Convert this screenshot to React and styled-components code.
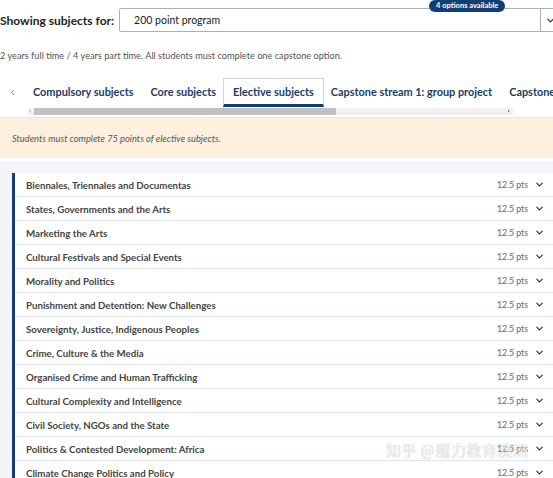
import React from 'react';
import styled, { createGlobalStyle } from 'styled-components';
import { ChevronDown, ChevronLeft } from 'lucide-react';

const GlobalStyle = createGlobalStyle`
  html, body {
    margin: 0;
    padding: 0;
    background: #ffffff;
    font-family: 'Lato', 'Noto Sans', sans-serif;
    overflow: hidden;
  }
`;

const Page = styled.div`
  position: relative;
  width: 553px;
  height: 478px;
  overflow: hidden;
`;

const SelectorRow = styled.div`
  display: flex;
  align-items: center;
  gap: 5px;
  padding-top: 8px;
  height: 24px;
`;

const SelectorLabel = styled.span`
  font-size: 12px;
  font-weight: 700;
  color: #222;
  white-space: nowrap;
`;

const SelectBox = styled.div`
  position: relative;
  flex: none;
  width: 462px;
  height: 24px;
  border: 1px solid #a9b1ba;
  border-radius: 2px;
  display: flex;
  align-items: center;
  box-sizing: border-box;
`;

const SelectValue = styled.span`
  flex: 1;
  padding-left: 14px;
  font-size: 10.5px;
  color: #222;
`;

const SelectArrow = styled.span`
  width: 40px;
  height: 100%;
  border-left: 1px solid #a9b1ba;
  display: flex;
  align-items: center;
  padding-left: 4px;
  box-sizing: border-box;
  color: #333;
`;

const Badge = styled.span`
  position: absolute;
  top: -9px;
  left: 309px;
  background: #123f73;
  color: #fff;
  font-size: 7.5px;
  font-weight: 700;
  padding: 1px 7px 2px;
  border-radius: 8px;
  white-space: nowrap;
`;

const Description = styled.p`
  margin: 18px 0 0;
  font-size: 9.2px;
  color: #555;
`;

const TabsArea = styled.div`
  margin-top: 17px;
  padding-left: 24.5px;
  position: relative;
`;

const TabPrev = styled.span`
  position: absolute;
  left: 8px;
  top: 10px;
  color: #555;
  display: flex;
`;

const TabList = styled.div`
  display: flex;
  align-items: stretch;
  height: 29px;
`;

const Tab = styled.div`
  display: flex;
  align-items: center;
  padding: 0 ${p => (p.$active ? '9px' : '7.5px')};
  margin: 0 ${p => (p.$active ? '-1.5px' : '0')};
  font-size: 10.9px;
  font-weight: 700;
  color: #1b3c66;
  white-space: nowrap;
  box-sizing: border-box;
  border: 1px solid ${p => (p.$active ? '#c9d6e3' : 'transparent')};
  border-bottom: 3px solid ${p => (p.$active ? '#123f73' : 'transparent')};
`;

const ScrollTrack = styled.div`
  position: relative;
  height: 7px;
  margin: 1px 40px 2px 3px;
  background: #f1f1f1;
`;

const ScrollThumb = styled.div`
  position: absolute;
  left: 6px;
  top: 0;
  height: 100%;
  background: #c1c1c1;
`;

const ScrollArrow = styled.span`
  position: absolute;
  top: 2px;
  ${p => (p.$right ? 'right: 3px;' : 'left: 1px;')}
  width: 0;
  height: 0;
  border-top: 1.5px solid transparent;
  border-bottom: 1.5px solid transparent;
  ${p => (p.$right ? 'border-left: 2px solid #555;' : 'border-right: 2px solid #aaa;')}
`;

const Notice = styled.div`
  background: #fdf0de;
  height: 40px;
  display: flex;
  align-items: center;
  padding-left: 12px;
  font-size: 9.3px;
  font-style: italic;
  color: #555;
  border-top: 1px solid #f6e4c8;
`;

const ListArea = styled.div`
  background: #f3f5f8;
  padding: 12px 0 0 12px;
  margin-top: 3px;
`;

const SubjectList = styled.ul`
  list-style: none;
  margin: 0;
  padding: 0;
  background: #fff;
  border-left: 3px solid #123f73;
`;

const SubjectRow = styled.li`
  height: 24px;
  display: flex;
  align-items: center;
  padding: 0 8px 0 11px;
  border-bottom: 1px solid #dce3ea;
  box-sizing: border-box;
`;

const SubjectName = styled.span`
  flex: 1;
  font-size: 9.7px;
  font-weight: 700;
  color: #444;
`;

const Points = styled.span`
  font-size: 8.7px;
  color: #666;
  margin-right: 6px;
`;

const RowChevron = styled.span`
  display: flex;
  color: #333;
`;

const Watermark = styled.div`
  position: absolute;
  left: 386px;
  top: 439px;
  font-family: 'Noto Sans CJK SC', sans-serif;
  font-size: 15px;
  color: rgba(255, 255, 255, 0.85);
  text-shadow: 0 0 1px rgba(0, 0, 0, 0.35);
  letter-spacing: 0.5px;
  white-space: nowrap;
`;

const tabs = [
  'Compulsory subjects',
  'Core subjects',
  'Elective subjects',
  'Capstone stream 1: group project',
  'Capstone stream 2',
];

const subjects = [
  'Biennales, Triennales and Documentas',
  'States, Governments and the Arts',
  'Marketing the Arts',
  'Cultural Festivals and Special Events',
  'Morality and Politics',
  'Punishment and Detention: New Challenges',
  'Sovereignty, Justice, Indigenous Peoples',
  'Crime, Culture & the Media',
  'Organised Crime and Human Trafficking',
  'Cultural Complexity and Intelligence',
  'Civil Society, NGOs and the State',
  'Politics & Contested Development: Africa',
  'Climate Change Politics and Policy',
];

const App = () => {
  return (
    <>
      <GlobalStyle />
      <Page>
        <SelectorRow>
          <SelectorLabel>Showing subjects for:</SelectorLabel>
          <SelectBox>
            <Badge>4 options available</Badge>
            <SelectValue>200 point program</SelectValue>
            <SelectArrow>
              <ChevronDown size={11} strokeWidth={2.5} />
            </SelectArrow>
          </SelectBox>
        </SelectorRow>

        <Description>
          2 years full time / 4 years part time. All students must complete one capstone option.
        </Description>

        <TabsArea>
          <TabPrev>
            <ChevronLeft size={9} strokeWidth={2} />
          </TabPrev>
          <TabList>
            {tabs.map(t => (
              <Tab key={t} $active={t === 'Elective subjects'}>{t}</Tab>
            ))}
          </TabList>
          <ScrollTrack>
            <ScrollArrow />
            <ScrollThumb style={{ width: '302px' }} />
            <ScrollArrow $right />
          </ScrollTrack>
        </TabsArea>

        <Notice>Students must complete 75 points of elective subjects.</Notice>

        <ListArea>
          <SubjectList>
            {subjects.map(s => (
              <SubjectRow key={s}>
                <SubjectName>{s}</SubjectName>
                <Points>12.5 pts</Points>
                <RowChevron>
                  <ChevronDown size={11} strokeWidth={2.5} />
                </RowChevron>
              </SubjectRow>
            ))}
          </SubjectList>
        </ListArea>

        <Watermark>知乎 @魔力教育澳洲</Watermark>
      </Page>
    </>
  );
};

export default App;
